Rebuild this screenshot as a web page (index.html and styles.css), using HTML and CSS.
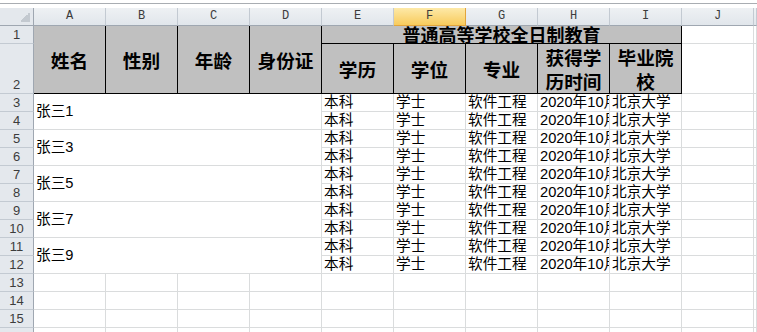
FILE: index.html
```html
<!DOCTYPE html>
<html lang="zh-CN">

<head>
    <meta charset="UTF-8">
    <meta name="viewport" content="width=device-width, initial-scale=1.0">
    <title>学历信息</title>
    <link rel="stylesheet" href="styles.css">
</head>

<body>
    <div class="topbar"></div>

    <div class="sheet">
        <!-- column headers -->
        <div class="corner"></div>
        <div class="ch">A</div>
        <div class="ch">B</div>
        <div class="ch">C</div>
        <div class="ch">D</div>
        <div class="ch">E</div>
        <div class="ch active">F</div>
        <div class="ch">G</div>
        <div class="ch">H</div>
        <div class="ch">I</div>
        <div class="ch">J</div>
        <div class="ch"></div>

        <!-- row 1 -->
        <div class="rh">1</div>
        <div class="th tall">姓名</div>
        <div class="th tall">性别</div>
        <div class="th tall">年龄</div>
        <div class="th tall">身份证</div>
        <div class="th title">普通高等学校全日制教育</div>
        <div class="c"></div>
        <div class="c"></div>

        <!-- row 2 -->
        <div class="rh">2</div>
        <div class="th">学历</div>
        <div class="th">学位</div>
        <div class="th">专业</div>
        <div class="th">获得学<br>历时间</div>
        <div class="th">毕业院<br>校</div>
        <div class="c"></div>
        <div class="c"></div>

        <!-- data -->
        <div class="rh">3</div>
        <div class="c name">张三1</div>
        <div class="c">本科</div><div class="c">学士</div><div class="c">软件工程</div><div class="c">2020年10月</div><div class="c">北京大学</div>
        <div class="c"></div><div class="c"></div>
        <div class="rh">4</div>
        <div class="c">本科</div><div class="c">学士</div><div class="c">软件工程</div><div class="c">2020年10月</div><div class="c">北京大学</div>
        <div class="c"></div><div class="c"></div>

        <div class="rh">5</div>
        <div class="c name">张三3</div>
        <div class="c">本科</div><div class="c">学士</div><div class="c">软件工程</div><div class="c">2020年10月</div><div class="c">北京大学</div>
        <div class="c"></div><div class="c"></div>
        <div class="rh">6</div>
        <div class="c">本科</div><div class="c">学士</div><div class="c">软件工程</div><div class="c">2020年10月</div><div class="c">北京大学</div>
        <div class="c"></div><div class="c"></div>

        <div class="rh">7</div>
        <div class="c name">张三5</div>
        <div class="c">本科</div><div class="c">学士</div><div class="c">软件工程</div><div class="c">2020年10月</div><div class="c">北京大学</div>
        <div class="c"></div><div class="c"></div>
        <div class="rh">8</div>
        <div class="c">本科</div><div class="c">学士</div><div class="c">软件工程</div><div class="c">2020年10月</div><div class="c">北京大学</div>
        <div class="c"></div><div class="c"></div>

        <div class="rh">9</div>
        <div class="c name">张三7</div>
        <div class="c">本科</div><div class="c">学士</div><div class="c">软件工程</div><div class="c">2020年10月</div><div class="c">北京大学</div>
        <div class="c"></div><div class="c"></div>
        <div class="rh">10</div>
        <div class="c">本科</div><div class="c">学士</div><div class="c">软件工程</div><div class="c">2020年10月</div><div class="c">北京大学</div>
        <div class="c"></div><div class="c"></div>

        <div class="rh">11</div>
        <div class="c name">张三9</div>
        <div class="c">本科</div><div class="c">学士</div><div class="c">软件工程</div><div class="c">2020年10月</div><div class="c">北京大学</div>
        <div class="c"></div><div class="c"></div>
        <div class="rh">12</div>
        <div class="c">本科</div><div class="c">学士</div><div class="c">软件工程</div><div class="c">2020年10月</div><div class="c">北京大学</div>
        <div class="c"></div><div class="c"></div>

        <!-- empty rows -->
        <div class="rh">13</div>
        <div class="c"></div><div class="c"></div><div class="c"></div><div class="c"></div><div class="c"></div><div class="c"></div>
        <div class="c"></div><div class="c"></div><div class="c"></div><div class="c"></div><div class="c"></div>
        <div class="rh">14</div>
        <div class="c"></div><div class="c"></div><div class="c"></div><div class="c"></div><div class="c"></div><div class="c"></div>
        <div class="c"></div><div class="c"></div><div class="c"></div><div class="c"></div><div class="c"></div>
        <div class="rh">15</div>
        <div class="c"></div><div class="c"></div><div class="c"></div><div class="c"></div><div class="c"></div><div class="c"></div>
        <div class="c"></div><div class="c"></div><div class="c"></div><div class="c"></div><div class="c"></div>
        <div class="rh">16</div>
        <div class="c"></div><div class="c"></div><div class="c"></div><div class="c"></div><div class="c"></div><div class="c"></div>
        <div class="c"></div><div class="c"></div><div class="c"></div><div class="c"></div><div class="c"></div>
    </div>
</body>

</html>
```

FILE: styles.css
```css
body {
    margin: 0px;
    padding: 0px;
    width: 757px;
    height: 332px;
    overflow: hidden;
    background-color: #ffffff;
    font-family: "Liberation Sans", "Noto Sans CJK SC", sans-serif;
    color: #000000;
}

.topbar {
    height: 3px;
    border-bottom: 1px solid #a9adb2;
    margin-bottom: 4px;
}

.sheet {
    display: grid;
    grid-template-columns: 34px repeat(10, 72px) 1fr;
    grid-template-rows: 18px 18px 50px repeat(14, 18px);
}

.sheet > div {
    box-sizing: border-box;
    border-right: 1px solid #dadcdd;
    border-bottom: 1px solid #dadcdd;
    overflow: hidden;
    white-space: nowrap;
}

/* headers */
.corner {
    position: relative;
    background-color: #e4e8ed;
    border-right-color: #9fa7b1 !important;
    border-bottom-color: #9fa7b1 !important;
}

.corner::after {
    content: '';
    position: absolute;
    right: 3px;
    bottom: 3px;
    width: 10px;
    height: 10px;
    background: linear-gradient(to top left, #c3c9d0 50%, transparent 50%);
}

.ch {
    background: linear-gradient(#eef1f4, #e1e6eb);
    border-right-color: #c3cad2 !important;
    border-bottom-color: #9fa7b1 !important;
    font-family: "Liberation Mono", monospace;
    font-size: 12px;
    line-height: 17px;
    text-align: center;
    color: #3c3c3c;
}

.ch.active {
    background: linear-gradient(#fde9a8, #f8cb5c);
    border-right-color: #e2a53b !important;
    border-bottom-color: #e2a53b !important;
}

.rh {
    display: flex;
    align-items: flex-end;
    justify-content: center;
    background-color: #e4e8ed;
    border-right-color: #9fa7b1 !important;
    border-bottom-color: #c3cad2 !important;
    font-size: 13px;
    line-height: 17px;
    color: #3c3c3c;
}

/* gray title block */
.th {
    display: flex;
    align-items: center;
    justify-content: center;
    background-color: #c0c0c0;
    border-right-color: #000000 !important;
    border-bottom-color: #000000 !important;
    font-family: "Noto Sans CJK SC", sans-serif;
    font-weight: bold;
    font-size: 18.67px;
    line-height: 24px;
    text-align: center;
    white-space: normal !important;
}

.th.tall {
    grid-row: span 2;
}

.th.title {
    grid-column: span 5;
    align-items: flex-end;
    font-size: 18px;
    line-height: 17px;
}

/* data cells */
.c {
    padding-left: 2px;
    font-size: 14.67px;
    line-height: 17px;
}

.c.name {
    grid-column: span 4;
    grid-row: span 2;
    display: flex;
    align-items: center;
}
```
